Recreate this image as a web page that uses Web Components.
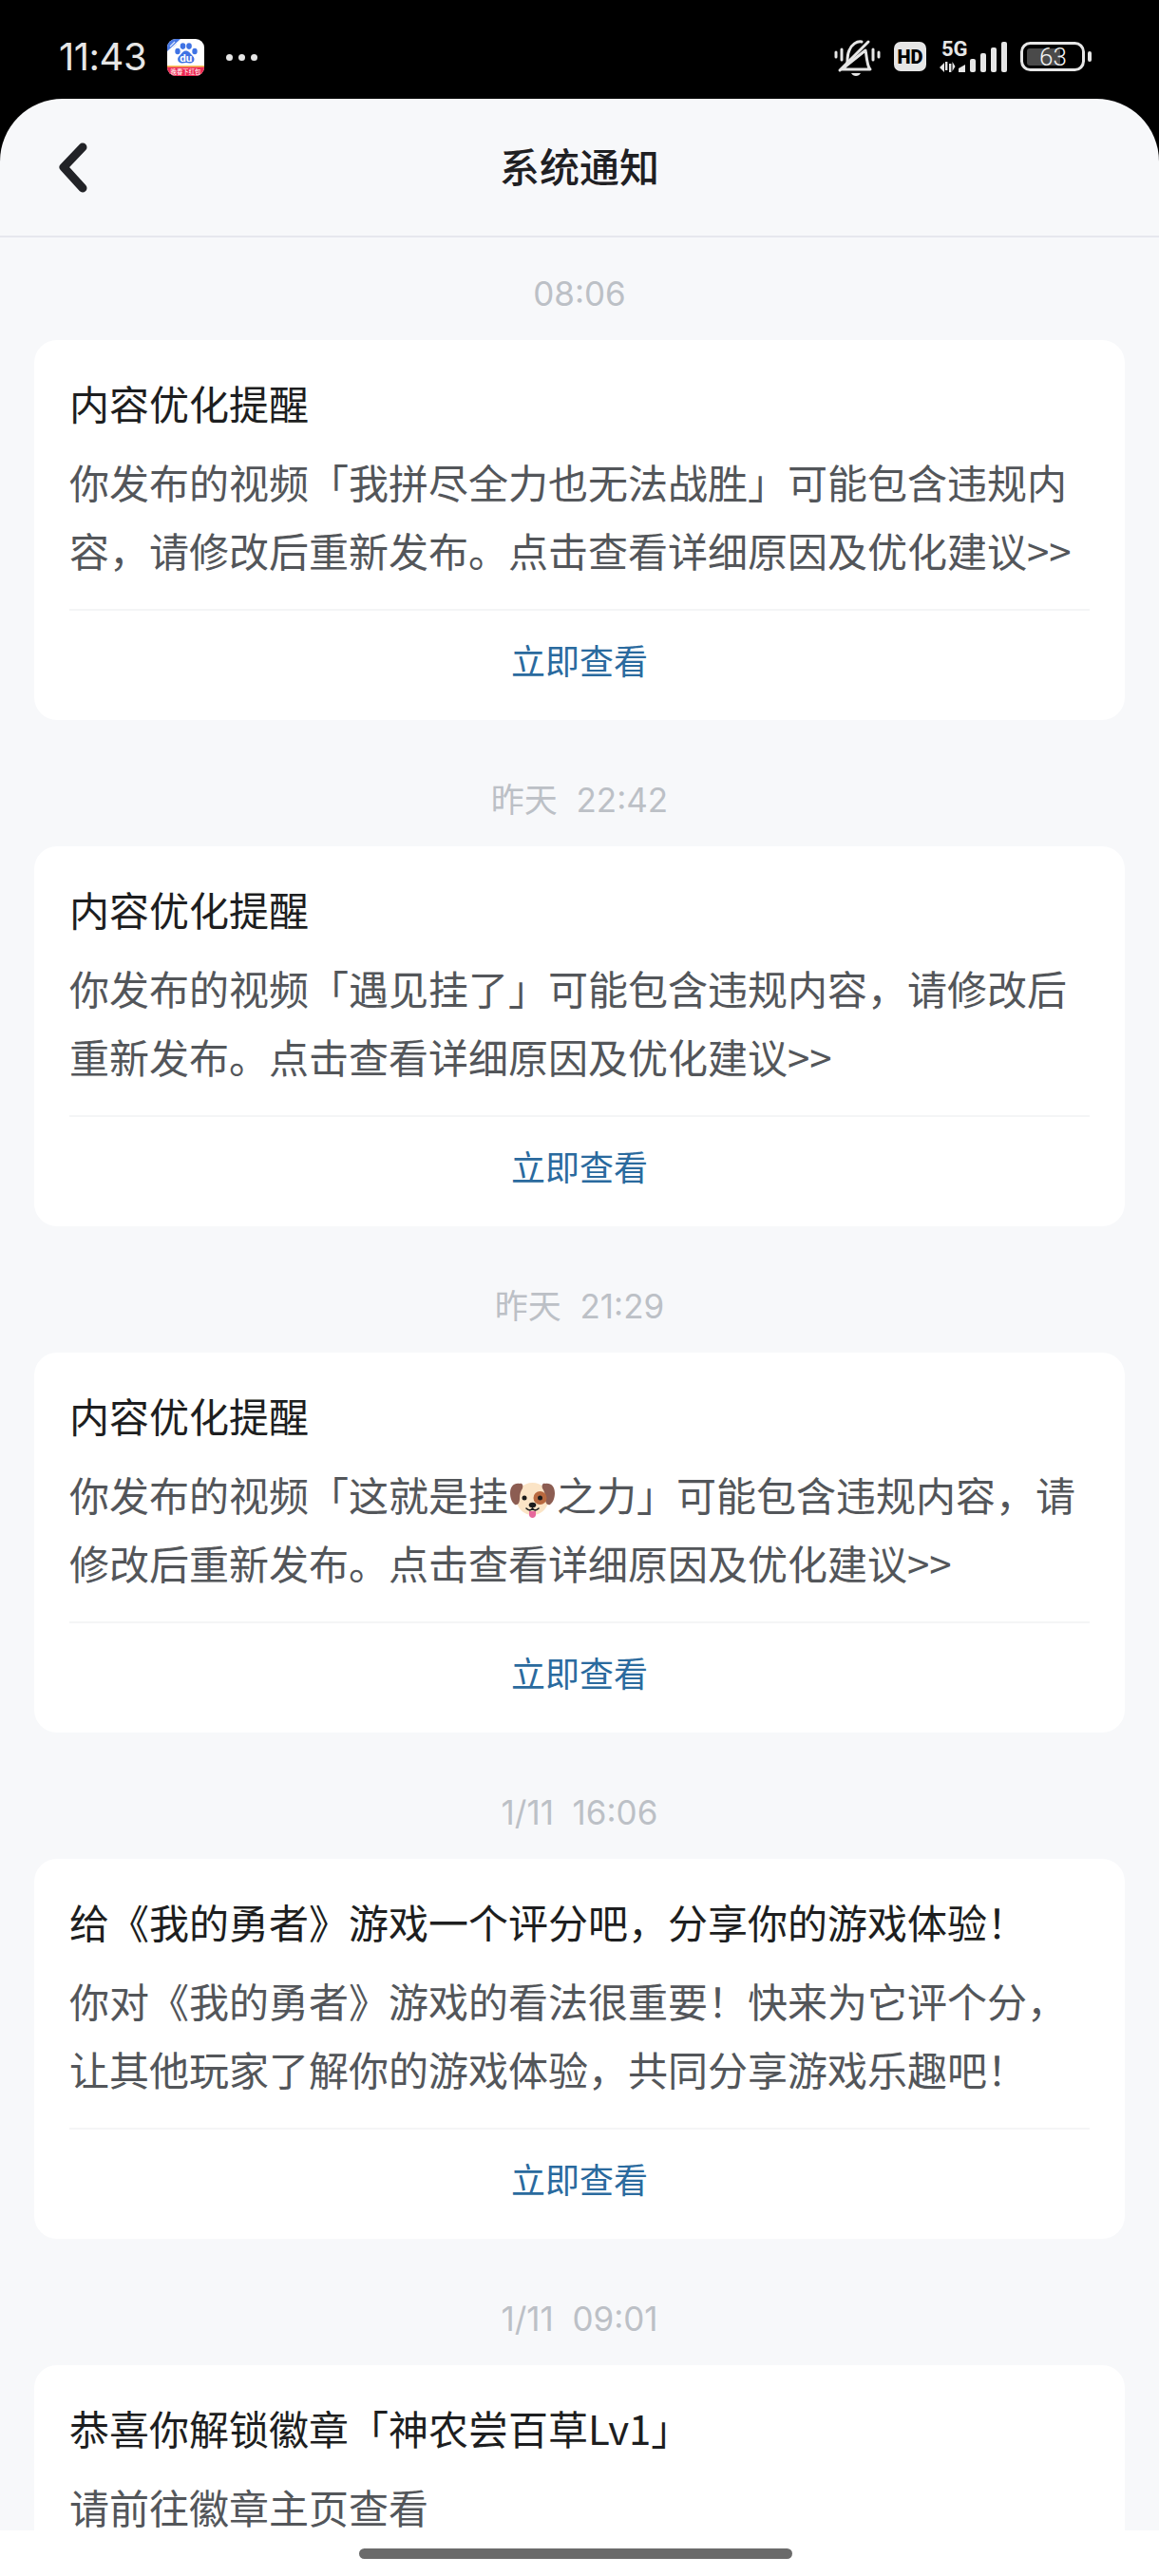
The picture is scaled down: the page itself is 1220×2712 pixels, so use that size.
<!DOCTYPE html>
<html lang="zh-CN">
<head>
<meta charset="utf-8">
<title>系统通知</title>
<style>
  html, body { margin: 0; padding: 0; background: #000; }
</style>
</head>
<body>
<app-shell>
  <status-bar time="11:43"></status-bar>
  <notice-panel heading="系统通知">
    <notice-item time="08:06" heading="内容优化提醒" action="立即查看">你发布的视频「我拼尽全力也无法战胜」可能包含违规内容，请修改后重新发布。点击查看详细原因及优化建议&gt;&gt;</notice-item>
    <notice-item time="昨天  22:42" heading="内容优化提醒" action="立即查看">你发布的视频「遇见挂了」可能包含违规内容，请修改后重新发布。点击查看详细原因及优化建议&gt;&gt;</notice-item>
    <notice-item time="昨天  21:29" heading="内容优化提醒" action="立即查看">你发布的视频「这就是挂<dog-emoji></dog-emoji>之力」可能包含违规内容，请修改后重新发布。点击查看详细原因及优化建议&gt;&gt;</notice-item>
    <notice-item time="1/11  16:06" heading="给《我的勇者》游戏一个评分吧，分享你的游戏体验！" action="立即查看">你对《我的勇者》游戏的看法很重要！快来为它评个分，让其他玩家了解你的游戏体验，共同分享游戏乐趣吧！</notice-item>
    <notice-item time="1/11  09:01" heading="恭喜你解锁徽章「神农尝百草Lv1」">请前往徽章主页查看</notice-item>
  </notice-panel>
  <home-bar></home-bar>
</app-shell>

<script>
const CJK = '"Noto Sans CJK SC", Roboto, sans-serif';

class AppShell extends HTMLElement {
  constructor() {
    super();
    this.attachShadow({ mode: 'open' }).innerHTML = `
      <style>
        :host {
          display: flex;
          flex-direction: column;
          height: 2712px;
          overflow: hidden;
          background: #000;
          font-family: ${CJK};
        }
      </style>
      <slot></slot>
    `;
  }
}

class BaiduIcon extends HTMLElement {
  constructor() {
    super();
    this.attachShadow({ mode: 'open' }).innerHTML = `
      <style>
        :host { display: block; width: 39px; height: 39px; }
        svg { display: block; }
      </style>
      <svg width="39" height="39" viewBox="0 0 39 39">
        <defs><clipPath id="c"><rect width="39" height="39" rx="9"/></clipPath></defs>
        <g clip-path="url(#c)">
          <rect width="39" height="39" fill="#fff"/>
          <path d="M0 0h14L0 13z" fill="#4a7ae6"/>
          <path d="M3 8l5-5M6 9l4-4" stroke="#dfe8fb" stroke-width="1.2"/>
          <rect y="28" width="39" height="11" fill="#ee2a55"/>
          <rect y="28" width="39" height="1.6" fill="#f6c65b"/>
          <text x="19.5" y="36.5" font-size="6.4" text-anchor="middle" fill="#fff" font-family="Noto Sans CJK SC, sans-serif">晚春下红包</text>
        </g>
        <g fill="#3f73e4">
          <ellipse cx="11" cy="13" rx="2.7" ry="3.2"/>
          <ellipse cx="16.5" cy="7.6" rx="2.8" ry="3.3"/>
          <ellipse cx="23" cy="7.6" rx="2.8" ry="3.3"/>
          <ellipse cx="29" cy="13" rx="2.7" ry="3.2"/>
          <path d="M19.8 12.5c3.2 0 4.2 2.5 6.2 4.4 1.7 1.6 2.9 3.2 2.4 5.4-.5 2.3-2.6 3.3-4.7 3.1-1.4-.1-2.6-.5-3.9-.5s-2.5.4-3.9.5c-2.1.2-4.2-.8-4.7-3.1-.5-2.2.7-3.8 2.4-5.4 2-1.9 3-4.4 6.1-4.4z"/>
        </g>
        <text x="19.8" y="24" font-size="11.5" font-weight="700" text-anchor="middle" fill="#fff" font-family="Roboto, sans-serif">du</text>
      </svg>
    `;
  }
}

class StatusBar extends HTMLElement {
  constructor() {
    super();
    this.attachShadow({ mode: 'open' }).innerHTML = `
      <style>
        :host {
          display: flex;
          align-items: center;
          flex: none;
          box-sizing: border-box;
          height: 104px;
          padding: 40px 70px 24px 62px;
          background: #000;
          color: #e6e6e6;
        }
        .time { width: 114px; font: 400 40px/40px Inter, sans-serif; letter-spacing: -0.5px; }
        .dots { display: flex; gap: 6px; margin-left: 23px; }
        .dots i { width: 7px; height: 7px; border-radius: 50%; background: #e6e6e6; }
        .right { display: flex; align-items: flex-start; gap: 13px; margin-left: auto; height: 40px; }
        svg { display: block; overflow: visible; }
      </style>
      <span class="time"></span>
      <baidu-icon></baidu-icon>
      <span class="dots"><i></i><i></i><i></i></span>
      <div class="right">
        <svg width="50" height="40" viewBox="0 0 50 40" fill="none" stroke="#e6e6e6" stroke-width="3" stroke-linecap="round" stroke-linejoin="round">
          <path d="M2 15v5M8 12v11M41 12v11M47 15v5" />
          <path d="M8 33c4-2 6-4 6-8 0-4 0-8 2-12 2-6 8-10 13-9M33 13c1 4 1 8 2 12 .5 3 1 6 3 8H8z"/>
          <path d="M6 34L36 4"/>
          <path d="M18 37h10c-1 2-3 3-5 3s-4-1-5-3z" fill="#e6e6e6" stroke="none"/>
        </svg>
        <svg width="34" height="31" viewBox="0 0 34 31" style="margin-top:4px">
          <rect width="34" height="31" rx="7" fill="#e6e6e6"/>
          <text x="17" y="22.5" font-size="20" font-weight="900" text-anchor="middle" fill="#000" font-family="Roboto, sans-serif">HD</text>
        </svg>
        <svg width="73" height="36" viewBox="0 0 73 36" style="margin-top:2px">
          <text x="3" y="17" font-size="22" font-weight="700" fill="#e6e6e6" font-family="Roboto, sans-serif">5G</text>
          <g fill="#e6e6e6">
            <path d="M1 29l5-5v10zM7 23h2.400v9H7zM11 25h2.400v9H11zM14.500 23l3 5-3 5z"/>
            <path d="M21 34v-4l7-4v8z"/>
            <rect x="33" y="20" width="6" height="14" rx="2"/>
            <rect x="44" y="14" width="6" height="20" rx="2"/>
            <rect x="55" y="8" width="6" height="26" rx="2"/>
            <rect x="66" y="2" width="6" height="32" rx="2"/>
          </g>
        </svg>
        <svg width="76" height="32" viewBox="0 0 76 32" style="margin-top:4px">
          <rect x="1.500" y="1.500" width="65" height="28" rx="9" fill="none" stroke="#e6e6e6" stroke-width="3"/>
          <rect x="7" y="7" width="35" height="18" rx="3" fill="#4a4a4a"/>
          <text x="34.500" y="25" font-size="26" font-weight="300" text-anchor="middle" fill="#f2f2f2" font-family="Roboto, sans-serif">63</text>
          <rect x="71" y="10" width="4" height="11" rx="2" fill="#e6e6e6"/>
        </svg>
      </div>
    `;
    this.shadowRoot.querySelector('.time').textContent = this.getAttribute('time');
  }
}

class NoticePanel extends HTMLElement {
  constructor() {
    super();
    this.attachShadow({ mode: 'open' }).innerHTML = `
      <style>
        :host {
          display: flex;
          flex-direction: column;
          flex: 1;
          min-height: 0;
          overflow: hidden;
          background: #f7f8fa;
          border-radius: 66px 66px 0 0;
        }
        header {
          flex: none;
          display: flex;
          align-items: center;
          justify-content: center;
          position: relative;
          box-sizing: border-box;
          height: 146px;
          padding-bottom: 6px;
          border-bottom: 2px solid #e6e7ee;
          color: #1f2023;
          font-size: 42px;
          font-weight: 500;
        }
        header svg { position: absolute; left: 60px; top: 46px; }
        .list { display: flex; flex-direction: column; gap: 59px; padding: 34px 36px 0; }
      </style>
      <header>
        <svg width="34" height="54" viewBox="0 0 34 54" fill="none" stroke="#222327" stroke-width="9" stroke-linecap="round" stroke-linejoin="round">
          <path d="M27 5L7 26l20 22"/>
        </svg>
        <span class="heading"></span>
      </header>
      <div class="list"><slot></slot></div>
    `;
    this.shadowRoot.querySelector('.heading').textContent = this.getAttribute('heading');
  }
}

class NoticeItem extends HTMLElement {
  constructor() {
    super();
    this.attachShadow({ mode: 'open' }).innerHTML = `
      <style>
        :host { display: block; }
        .time {
          height: 50px;
          margin-bottom: 24px;
          text-align: center;
          white-space: pre;
          color: #bcc0c6;
          font: 400 35px/50px Inter, "Noto Sans CJK SC", sans-serif;
        }
        .card {
          box-sizing: border-box;
          min-height: 400px;
          padding: 38px 37px 0;
          background: #fff;
          border-radius: 24px;
        }
        .heading { color: #1d1e20; font-size: 42px; line-height: 56px; }
        .body { margin-top: 19px; color: #53565a; font-size: 42px; line-height: 72px; }
        .foot {
          margin-top: 26px;
          border-top: 2px solid #f4f5f6;
          text-align: center;
          color: #2a6a9e;
          font-size: 36px;
          line-height: 102px;
        }
      </style>
      <div class="time"></div>
      <div class="card">
        <div class="heading"></div>
        <div class="body"><slot></slot></div>
        <div class="foot"></div>
      </div>
    `;
    const root = this.shadowRoot;
    root.querySelector('.time').textContent = this.getAttribute('time');
    root.querySelector('.heading').textContent = this.getAttribute('heading');
    const action = this.getAttribute('action');
    if (action) root.querySelector('.foot').textContent = action;
    else root.querySelector('.foot').remove();
  }
}

class DogEmoji extends HTMLElement {
  constructor() {
    super();
    this.attachShadow({ mode: 'open' }).innerHTML = `
      <style>
        :host { display: inline-block; width: 51px; height: 38px; vertical-align: -7px; }
        svg { display: block; margin-left: 2px; }
      </style>
      <svg width="47" height="38" viewBox="0 0 47 38">
        <ellipse cx="23.500" cy="18" rx="17" ry="17" fill="#fbe4c6"/>
        <path d="M10 2C4 1 0 5 0 12c0 5 2 10 5 12 3 1 5-2 5-6 0-5 1-8 3-11 1-3 0-6-3-5z" fill="#8c5d52"/>
        <path d="M37 2c6-1 10 3 10 10 0 5-2 10-5 12-3 1-5-2-5-6 0-5-1-8-3-11-1-3 0-6 3-5z" fill="#8c5d52"/>
        <circle cx="31.500" cy="17" r="7" fill="#b9693f"/>
        <circle cx="15" cy="17" r="2.500" fill="#1b1b1b"/>
        <circle cx="31.500" cy="17" r="2.500" fill="#1b1b1b"/>
        <path d="M20 31h7v3.500c0 2-1.500 3.500-3.500 3.500S20 36.500 20 34.500z" fill="#e6689c"/>
        <path d="M17 28c2.500 2.500 4.500 2.500 6.500 0 2 2.500 4 2.500 6.500 0" fill="none" stroke="#1b1b1b" stroke-width="1.600" stroke-linecap="round"/>
        <ellipse cx="23.500" cy="24.500" rx="3.800" ry="2.800" fill="#1b1b1b"/>
      </svg>
    `;
  }
}

class HomeBar extends HTMLElement {
  constructor() {
    super();
    this.attachShadow({ mode: 'open' }).innerHTML = `
      <style>
        :host {
          display: flex;
          justify-content: center;
          flex: none;
          box-sizing: border-box;
          height: 48px;
          padding: 19px 8px 0 0;
          background: #fff;
        }
        .handle { width: 456px; height: 11px; border-radius: 6px; background: #6b6b6b; }
      </style>
      <div class="handle"></div>
    `;
  }
}

customElements.define('app-shell', AppShell);
customElements.define('baidu-icon', BaiduIcon);
customElements.define('status-bar', StatusBar);
customElements.define('notice-panel', NoticePanel);
customElements.define('notice-item', NoticeItem);
customElements.define('dog-emoji', DogEmoji);
customElements.define('home-bar', HomeBar);
</script>
</body>
</html>
